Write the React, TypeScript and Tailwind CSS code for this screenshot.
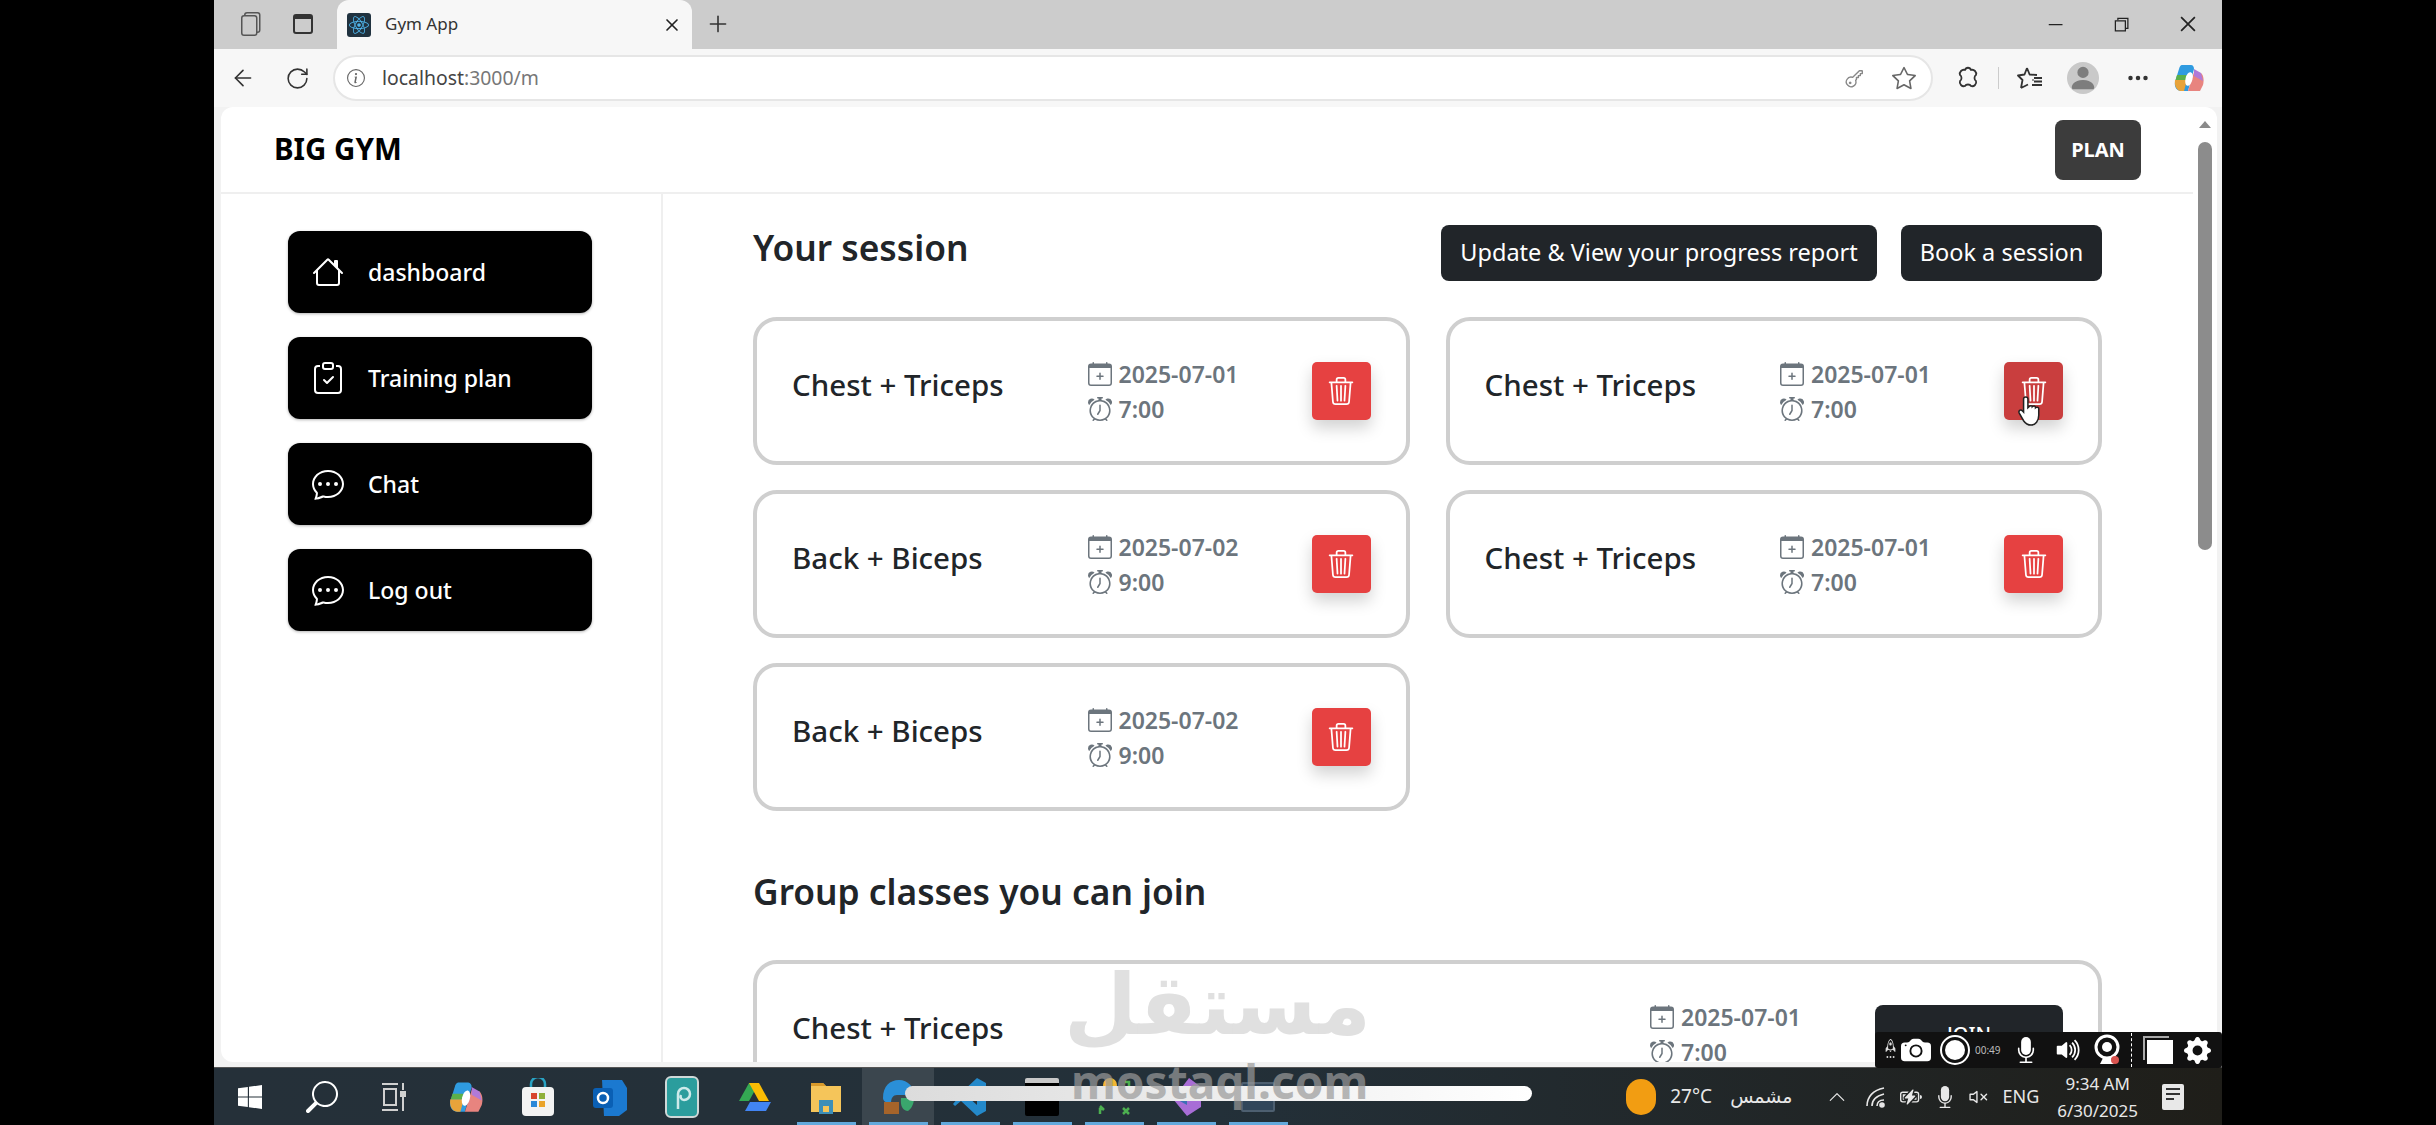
import React from "react";
import {
  BsHouse,
  BsClipboardCheck,
  BsChatDots,
  BsCalendarPlus,
  BsAlarm,
  BsTrash3,
  BsStar,
  BsKey,
  BsThreeDots,
  BsInfoCircle,
  BsGearFill,
  BsCameraFill,
  BsMicFill,
  BsVolumeUpFill,
  BsChevronUp,
  BsBatteryCharging,
  BsVolumeMute,
  BsFiles,
  BsPersonFill,
  BsSearch,
  BsWindows,
  BsRocket,
} from "react-icons/bs";
import { FaReact } from "react-icons/fa";
import { VscChromeMinimize, VscChromeRestore, VscChromeClose } from "react-icons/vsc";
import { ArrowLeft, RotateCw, Plus, X } from "lucide-react";

const sessions = [
  { title: "Chest + Triceps", date: "2025-07-01", time: "7:00" },
  { title: "Chest + Triceps", date: "2025-07-01", time: "7:00", hover: true },
  { title: "Back + Biceps", date: "2025-07-02", time: "9:00" },
  { title: "Chest + Triceps", date: "2025-07-01", time: "7:00" },
  { title: "Back + Biceps", date: "2025-07-02", time: "9:00" },
];

const DateTime = ({ date, time, className }: { date: string; time: string; className: string }) => (
  <div className={`flex flex-col gap-[7px] text-[23px] leading-[28px] font-semibold text-[#6c757d] ${className}`}>
    <div className="flex items-center gap-[7px]">
      <BsCalendarPlus className="w-[24px] h-[24px]" />
      <span>{date}</span>
    </div>
    <div className="flex items-center gap-[7px]">
      <BsAlarm className="w-[24px] h-[24px]" />
      <span>{time}</span>
    </div>
  </div>
);

const SessionCard = ({ s }: { s: (typeof sessions)[number] }) => (
  <div className="h-[148px] border-4 border-[#cfcfcf] rounded-[24px] bg-white pl-[35px] pr-[35px] flex items-center">
    <div className="flex-1 mb-[12px] text-[29.500px] leading-[40px] font-medium text-[#212529]">{s.title}</div>
    <DateTime date={s.date} time={s.time} className="w-[224px]" />
    <div className="relative">
      <button
        className={`w-[59px] h-[58px] rounded-[5px] flex items-center justify-center text-white shadow-[0_8px_16px_rgba(0,0,0,0.18)] ${
          s.hover ? "bg-[#c93e3e]" : "bg-[#e64141]"
        }`}
      >
        <BsTrash3 className="w-[28px] h-[30px]" />
      </button>
      {s.hover && (
        <svg viewBox="0 0 24 30" className="absolute left-[12px] top-[30px] w-[26px] h-[38px]">
          <path
            d="M7 16V4a2 2 0 0 1 4 0v8l1-1c1-1 3-1 3 0 1-1 3-1 3 1 1-1 3-.5 3 1v6c0 5-3 9-7 9-3 0-5-1-7-4l-4-7c-1-2 1-4 3-2z"
            fill="white"
            stroke="#222"
            strokeWidth="1.4"
          />
        </svg>
      )}
    </div>
  </div>
);

const SideButton = ({ icon, label }: { icon: React.ReactNode; label: string }) => (
  <button className="w-[304px] h-[82px] rounded-[12px] bg-black text-white flex items-center pl-[24px] gap-[24px] text-[23px] font-medium shadow-[0_1px_3px_rgba(0,0,0,0.3)]">
    <span className="w-[32px] flex justify-center">{icon}</span>
    <span>{label}</span>
  </button>
);

// taskbar app icons, drawn roughly
const Copilot = ({ size }: { size: number }) => (
  <svg width={size} height={size} viewBox="0 0 32 32">
    <path d="M9 3h9c2 0 3 2 3 4L15 29H8c-4 0-7-4-6-9L6 7c.5-2 1.500-4 3-4z" fill="#2f9be0" />
    <path d="M2 18h12l-3 11H8c-4 0-7-5-6-11z" fill="#e8a33a" />
    <path d="M4 13h10l-1 5H2.500z" fill="#5bb04a" />
    <path d="M21 10l7 1c3 3 3 8 2 12l-3 6H15z" fill="#e8847f" />
    <path d="M21 7l7 4 2 8-9-5z" fill="#b07ad8" />
    <ellipse cx="16" cy="17" rx="3.500" ry="7" transform="rotate(14 16 17)" fill="white" />
  </svg>
);

const taskbarIcons: React.ReactNode[] = [
  <BsWindows className="w-[24px] h-[24px] text-white" />,
  <BsSearch className="w-[32px] h-[32px] text-white -scale-x-100" />,
  <svg width="26" height="30" viewBox="0 0 26 30" fill="none" stroke="#d0d0d0" strokeWidth="2">
    <path d="M1 2h16M1 28h16" />
    <rect x="3" y="7" width="12" height="16" />
    <path d="M22 1v7M22 15v14" />
    <rect x="20" y="10" width="4" height="4" fill="#d0d0d0" />
  </svg>,
  <Copilot size={36} />,
  <svg width="34" height="38" viewBox="0 0 34 38">
    <path d="M10 10V6a7 7 0 0 1 14 0v4" fill="none" stroke="#29a3c4" strokeWidth="2.500" />
    <rect x="1" y="9" width="32" height="29" rx="4" fill="#f3f3f3" />
    <rect x="10" y="15" width="6" height="6" fill="#d8442e" />
    <rect x="18" y="15" width="6" height="6" fill="#8fb03a" />
    <rect x="10" y="23" width="6" height="6" fill="#2b88d8" />
    <rect x="18" y="23" width="6" height="6" fill="#eaa42b" />
  </svg>,
  <svg width="36" height="38" viewBox="0 0 36 38">
    <path d="M10 2h20l5 8v22l-8 6H12z" fill="#1b79d0" />
    <rect x="1" y="10" width="20" height="20" rx="3" fill="#0a5fb4" />
    <circle cx="11" cy="20" r="5" fill="none" stroke="white" strokeWidth="2.500" />
  </svg>,
  <svg width="34" height="42" viewBox="0 0 34 42">
    <rect x="1" y="1" width="32" height="40" rx="5" fill="#2b9d9d" stroke="#cfd8d8" strokeWidth="2" />
    <path d="M13 33V18a6 6 0 1 1 6 6c-3 0-4-3-3-5" fill="none" stroke="#cdeaea" strokeWidth="2.500" />
  </svg>,
  <svg width="34" height="32" viewBox="0 0 34 32">
    <path d="M12 2h10L12 20H2z" fill="#34a853" />
    <path d="M12 2h10l10 18H22z" fill="#fbbc04" />
    <path d="M8 30l5-9h21l-5 9z" fill="#4285f4" />
  </svg>,
  <svg width="32" height="34" viewBox="0 0 32 34">
    <path d="M1 3h12l3 3h15v26H1z" fill="#f5c55a" />
    <path d="M1 3h12l3 3H1z" fill="#d99a2b" />
    <rect x="9" y="20" width="14" height="14" fill="#3d8fb8" />
    <rect x="13" y="26" width="6" height="6" fill="#f5c55a" />
  </svg>,
  <svg width="34" height="38" viewBox="0 0 34 38">
    <path d="M2 20C2 8 9 2 18 2c9 0 15 7 15 15H16c-4 0-6 3-6 8-5 0-8-2-8-5z" fill="#2a8fd8" />
    <path d="M20 20h13c0 5-2 10-6 13-5 0-8-5-7-13z" fill="#3aa76d" />
    <rect x="3" y="24" width="15" height="12" fill="#a5642a" />
  </svg>,
  <svg width="34" height="40" viewBox="0 0 34 40">
    <path d="M24 1l9 5v28l-9 5L8 24l-6 5-2-2 6-7-6-7 2-2 6 5zM24 12l-9 8 9 8z" fill="#2489ca" />
  </svg>,
  <div className="w-[34px] h-[38px] bg-black border-t-[5px] border-[#c8c8c8] rounded-[2px]" />,
  <svg width="34" height="38" viewBox="0 0 34 38">
    <circle cx="13" cy="7" r="7" fill="#f2b632" />
    <path d="M3 28l4 4M3 36v-5h4M28 4h4v5M26 30l6 6M32 30l-6 6" stroke="#4caf50" strokeWidth="2.500" fill="none" />
  </svg>,
  <svg width="38" height="40" viewBox="0 0 38 40">
    <path d="M22 1l12 9v20L20 39 6 22z" fill="#a86dd6" />
    <path d="M2 18l18-6v16z" fill="#3c6fb5" />
  </svg>,
  <div className="w-[34px] h-[30px] bg-[#31465a] border-[2px] border-[#4d5f70] rounded-[2px]" />,
];

export default function App() {
  return (
    <div
      className="relative w-[2436px] h-[1125px] bg-black pl-[214px] pr-[214px] overflow-hidden"
      style={{ fontFamily: '"Noto Sans", "Open Sans", sans-serif' }}
    >
      <div className="h-full flex flex-col">
        {/* Tab strip */}
        <div className="h-[49px] bg-[#cccccc] flex items-end text-[#333]">
          <div className="w-[123px] h-full flex items-center pl-[24px] gap-[31px] pb-[2px]">
            <BsFiles className="w-[24px] h-[24px] text-[#555]" />
            <div className="w-[20px] h-[20px] border-2 border-t-[5px] border-[#333] rounded-[3px]" />
          </div>
          <div className="w-[355px] h-[49px] bg-[#f7f7f7] rounded-t-[12px] flex items-center pl-[10px] pr-[10px]">
            <div className="w-[24px] h-[24px] bg-[#20323f] rounded-[3px] flex items-center justify-center">
              <FaReact className="w-[20px] h-[20px] text-[#4fb3e8]" />
            </div>
            <span className="ml-[14px] mb-[2px] flex-1 text-[17px] text-[#333]">Gym App</span>
            <X className="w-[20px] h-[20px] text-[#222]" />
          </div>
          <div className="h-full flex items-center pl-[13px] pb-[2px]">
            <Plus className="w-[26px] h-[26px] text-[#333]" strokeWidth={1.5} />
          </div>
          <div className="flex-1 h-full flex items-center justify-end pr-[23px] gap-[46px] pb-[2px]">
            <VscChromeMinimize className="w-[20px] h-[20px] text-[#222]" />
            <VscChromeRestore className="w-[20px] h-[20px] text-[#222]" />
            <VscChromeClose className="w-[22px] h-[22px] text-[#222]" />
          </div>
        </div>

        {/* Toolbar */}
        <div className="h-[58px] bg-[#f7f7f7] flex items-center text-[#333]">
          <div className="w-[119px] flex items-center pl-[16px] gap-[29px]">
            <ArrowLeft className="w-[26px] h-[26px]" strokeWidth={1.5} />
            <RotateCw className="w-[25px] h-[25px]" strokeWidth={1.5} />
          </div>
          <div className="w-[1600px] h-[46px] bg-white border-2 border-[#e6e6e6] rounded-full flex items-center pl-[12px] pr-[15px]">
            <BsInfoCircle className="w-[18px] h-[18px] text-[#666]" />
            <span className="ml-[17px] flex-1 text-[19.400px] text-[#444]">
              localhost<span className="text-[#777]">:3000/m</span>
            </span>
            <BsKey className="w-[22px] h-[22px] text-[#888] mr-[26px] -rotate-45" />
            <BsStar className="w-[24px] h-[24px] text-[#666]" />
          </div>
          <div className="flex-1 flex items-center pl-[23px] text-[#333]">
            {/* extensions */}
            <svg width="24" height="24" viewBox="0 0 24 24" fill="none" stroke="#333" strokeWidth="1.800" strokeLinejoin="round">
              <path d="M9 4c1-3 5-3 6 0 3-1 6 2 5 5-2 1-2 5 0 6 1 3-2 6-5 5-1-2-5-2-6 0-3 1-6-2-5-5 2-1 2-5 0-6-1-3 2-6 5-5z" />
            </svg>
            <div className="w-px h-[22px] bg-[#ccc] ml-[18px] mr-[18px]" />
            {/* favorites */}
            <svg width="26" height="24" viewBox="0 0 26 24" fill="none" stroke="#333" strokeWidth="1.800" strokeLinejoin="round">
              <path d="M10 2l2.600 6.500L20 9M15.500 14l1 0M4 22l1.500-8L1 9.500l6.500-1L10 2M4 22l7-3.500" />
              <path d="M17 12h8M17 15.500h8M15 19h10" />
            </svg>
            <div className="ml-[24px] w-[32px] h-[32px] rounded-full bg-[#c9c9c9] flex items-center justify-center overflow-hidden">
              <BsPersonFill className="w-[30px] h-[30px] text-[#7d7d7d]" />
            </div>
            <BsThreeDots className="ml-[27px] w-[24px] h-[24px]" />
            <span className="ml-[23px]">
              <Copilot size={32} />
            </span>
          </div>
        </div>

        {/* Browser viewport */}
        <div className="h-[960px] bg-[#f2f2f2] pl-[7px] pr-[5px] pb-[5px]">
          <div className="h-full bg-white rounded-[12px] flex overflow-hidden">
            <div className="flex-1 flex flex-col">
              <header className="h-[87px] shrink-0 border-b-2 border-[#efefef] flex items-center justify-between pl-[53px] pr-[52px]">
                <span className="text-[29.500px] font-bold text-black">BIG GYM</span>
                <button className="w-[86px] h-[60px] rounded-[8px] bg-[#3c3c3c] text-white text-[20px] font-bold">
                  PLAN
                </button>
              </header>

              <div className="flex-1 flex min-h-0">
                {/* Sidebar */}
                <aside className="w-[442px] shrink-0 border-r-2 border-[#efefef] pl-[67px] pt-[37px] flex flex-col gap-[24px]">
                  <SideButton icon={<BsHouse className="w-[32px] h-[32px]" />} label="dashboard" />
                  <SideButton icon={<BsClipboardCheck className="w-[32px] h-[32px]" />} label="Training plan" />
                  <SideButton icon={<BsChatDots className="w-[32px] h-[32px]" />} label="Chat" />
                  <SideButton icon={<BsChatDots className="w-[32px] h-[32px]" />} label="Log out" />
                </aside>

                {/* Main */}
                <main className="flex-1 pl-[90px] pr-[91px] pt-[31px] overflow-hidden">
                  <div className="flex items-start justify-between">
                    <h2 className="text-[35.300px] leading-[44px] font-semibold text-[#212529]">Your session</h2>
                    <div className="flex gap-[24px]">
                      <button className="h-[56px] w-[436px] rounded-[8px] bg-[#212529] text-white text-[23.500px]">
                        Update &amp; View your progress report
                      </button>
                      <button className="h-[56px] w-[201px] rounded-[8px] bg-[#212529] text-white text-[23.500px]">
                        Book a session
                      </button>
                    </div>
                  </div>

                  <div className="grid grid-cols-2 gap-x-[36px] gap-y-[25px] mt-[36px]">
                    {sessions.map((s, i) => (
                      <SessionCard key={i} s={s} />
                    ))}
                  </div>

                  <h2 className="mt-[55px] text-[35.300px] leading-[50px] font-semibold text-[#212529]">
                    Group classes you can join
                  </h2>

                  <div className="mt-[44px] h-[148px] border-4 border-[#cfcfcf] rounded-[24px] pl-[35px] pr-[35px] flex items-center">
                    <div className="flex-1 mb-[12px] text-[29.500px] leading-[40px] font-medium text-[#212529]">
                      Chest + Triceps
                    </div>
                    <DateTime date="2025-07-01" time="7:00" className="w-[225px]" />
                    <button className="w-[188px] h-[58px] rounded-[8px] bg-[#212529] text-white text-[20px] font-medium">
                      JOIN
                    </button>
                  </div>
                </main>
              </div>
            </div>

            {/* Scrollbar */}
            <div className="w-[24px] shrink-0 pl-[5px] pr-[5px] pt-[14px] flex flex-col items-center">
              <div className="w-0 h-0 border-l-[6px] border-r-[6px] border-b-[7px] border-l-transparent border-r-transparent border-b-[#8a8a8a]" />
              <div className="mt-[14px] w-[14px] h-[408px] rounded-full bg-[#8c8c8c]" />
            </div>
          </div>
        </div>

        {/* Taskbar */}
        <div className="h-[58px] border-t border-[#555] bg-gradient-to-r from-[#253039] via-[#233039] to-[#1f1e19] flex items-center text-white">
          <div className="flex items-center">
            {taskbarIcons.map((icon, i) => (
              <div key={i} className={`w-[72px] h-[57px] flex items-center justify-center ${i === 9 ? "bg-[#3b464e]" : ""}`}>
                {icon}
              </div>
            ))}
          </div>
          <div className="flex-1 flex items-center justify-end text-[#e8e8e8]">
            <div className="w-[30px] h-[36px] rounded-full bg-[#f29d12]" />
            <span className="ml-[14px] text-[19px]">27°C</span>
            <span className="ml-[18px] text-[19px]" style={{ fontFamily: '"DejaVu Sans", sans-serif' }}>
              مشمس
            </span>
            <BsChevronUp className="ml-[36px] w-[18px] h-[18px]" />
            <svg width="22" height="22" viewBox="0 0 22 22" fill="none" stroke="#e8e8e8" strokeWidth="1.600" className="ml-[18px]">
              <path d="M3 20C3 11 9 4 20 2M8 20c0-6 4-10 12-12M13 20c0-3 2-6 7-6" />
              <circle cx="18" cy="19" r="2" fill="#e8e8e8" />
            </svg>
            <BsBatteryCharging className="ml-[14px] w-[22px] h-[22px]" />
            <BsMicFill className="ml-[12px] w-[22px] h-[24px]" />
            <BsVolumeMute className="ml-[12px] w-[22px] h-[22px]" />
            <span className="ml-[12px] text-[18px]">ENG</span>
            <div className="ml-[18px] flex flex-col items-center text-[17px] leading-[27px]">
              <span>9:34 AM</span>
              <span>6/30/2025</span>
            </div>
            <div className="ml-[24px] mr-[38px] w-[22px] h-[26px] bg-[#e8e8e8] rounded-[2px] flex flex-col gap-[3px] p-[4px]">
              <div className="h-[2px] bg-[#333]" />
              <div className="h-[2px] bg-[#333]" />
              <div className="h-[2px] w-[8px] bg-[#333]" />
            </div>
          </div>
        </div>
      </div>

      {/* Running app markers on the taskbar */}
      <div className="absolute left-[797px] bottom-0 flex gap-[13px]">
        {[0, 1, 2, 3, 4, 5, 6].map((n) => (
          <div key={n} className="w-[59px] h-[3px] bg-[#62a9dc]" />
        ))}
      </div>

      {/* Video player seek bar */}
      <div className="absolute left-[905px] top-[1086px] w-[627px] h-[15px] rounded-full bg-gradient-to-r from-[#dcdcdc] to-white" />

      {/* Watermark */}
      <div className="absolute left-[1071px] top-[950px] w-[293px] flex justify-center text-[#9a9a9a] opacity-30 pointer-events-none">
        <span className="text-[84px] leading-[110px] font-bold" style={{ fontFamily: '"DejaVu Sans", sans-serif' }}>
          مستقل
        </span>
      </div>
      <div className="absolute left-[1071px] top-[1056px] w-[293px] text-center text-[46px] leading-[50px] font-bold text-[#9a9a9a] opacity-70 pointer-events-none">
        mostaql.com
      </div>

      {/* Screen recorder toolbar */}
      <div className="absolute left-[1875px] top-[1032px] w-[347px] h-[36px] bg-[#111] rounded-[3px] flex items-center pl-[4px] text-white">
        <div className="w-[22px] flex flex-col items-center text-[#ddd]">
          <BsRocket className="w-[13px] h-[13px]" />
          <BsThreeDots className="w-[13px] h-[10px]" />
        </div>
        <BsCameraFill className="w-[30px] h-[30px]" />
        <div className="ml-[9px] w-[30px] h-[30px] rounded-full border-2 border-white p-[3px]">
          <div className="w-full h-full rounded-full bg-white" />
        </div>
        <span className="ml-[5px] text-[10px] text-[#bbb]">00:49</span>
        <BsMicFill className="ml-[12px] w-[26px] h-[28px]" />
        <BsVolumeUpFill className="ml-[16px] w-[28px] h-[28px]" />
        <svg width="26" height="32" viewBox="0 0 26 32" className="ml-[11px]">
          <circle cx="13" cy="13" r="11" fill="none" stroke="white" strokeWidth="3" />
          <circle cx="13" cy="13" r="5" fill="white" />
          <path d="M6 30h14l-3-6H9z" fill="white" />
          <circle cx="21" cy="26" r="4" fill="#d9534f" />
        </svg>
        <div className="ml-[11px] h-[34px] border-l border-dashed border-white" />
        <div className="ml-[11px] relative w-[30px] h-[28px]">
          <div className="absolute left-0 top-0 w-[26px] h-[24px] border-t-2 border-l-2 border-[#aaa]" />
          <div className="absolute left-[4px] top-[4px] w-[26px] h-[24px] bg-white" />
        </div>
        <BsGearFill className="ml-[11px] w-[27px] h-[27px]" />
      </div>
    </div>
  );
}
